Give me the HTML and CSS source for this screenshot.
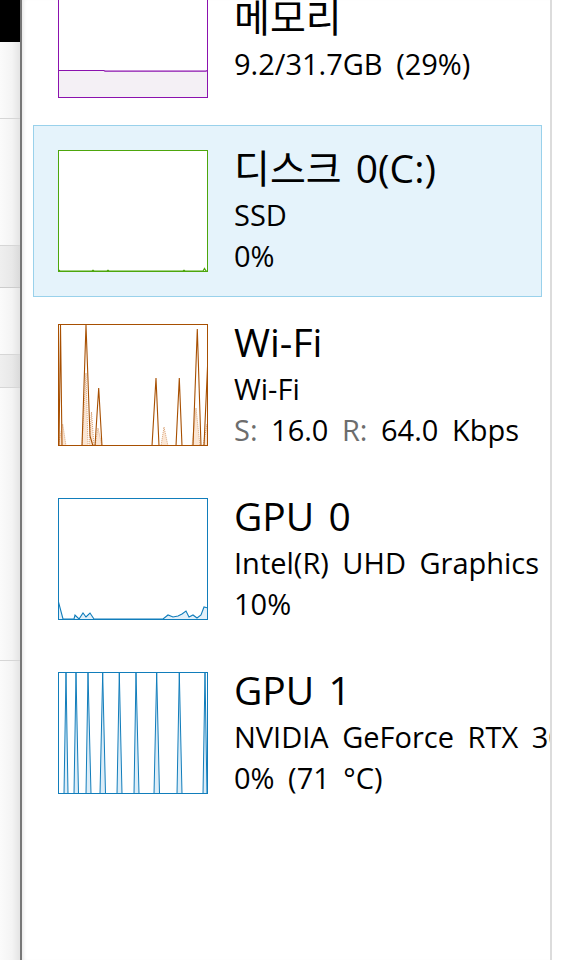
FILE: index.html
```html
<!DOCTYPE html>
<html lang="ko">
<head>
<meta charset="utf-8">
<title>성능</title>
<link rel="stylesheet" href="styles.css">
</head>
<body>
<div class="screen">
  <div class="backdrop">
    <div class="bk bk-black"></div>
    <div class="bk bk-a"></div>
    <div class="bk bk-b"></div>
    <div class="bk bk-c gray"></div>
    <div class="bk bk-d"></div>
    <div class="bk bk-e gray"></div>
    <div class="bk bk-f"></div>
    <div class="bk bk-g"></div>
  </div>
  <div class="edge"></div>
  <div class="panel">
    <div class="list">
      <div class="item">
        <div class="graph mem">
          <svg viewBox="1 1 148 120" preserveAspectRatio="none">
            <polygon points="0,94.5 46,94.5 47,95.2 150,95.2 150,122 0,122" fill="#f4f0f5"/>
            <polyline points="0,94.5 46,94.5 47,95.2 148,95.2 149,94.6 150,94.6" fill="none" stroke="#8b12ae" stroke-width="1.2"/>
          </svg>
        </div>
        <div class="text two">
          <div class="title">메모리</div>
          <div class="line">9.2/31.7GB (29%)</div>
        </div>
      </div>

      <div class="item selected">
        <div class="graph disk">
          <svg viewBox="1 1 148 120" preserveAspectRatio="none">
            <polyline points="0,121 1,120.2 2,121 34,121 35,120.2 36,121 49,121 50,120.2 51,121 125,121 126,120.2 127,121 145,121 146.5,118.5 148,121 150,121" fill="none" stroke="#4da60c" stroke-width="1.2"/>
          </svg>
        </div>
        <div class="text">
          <div class="title">디스크 0(C:)</div>
          <div class="line">SSD</div>
          <div class="line">0%</div>
        </div>
      </div>

      <div class="item">
        <div class="graph net">
          <svg viewBox="1 1 148 120" preserveAspectRatio="none">
            <polygon points="0,122 4.7,100 8,122 24,122 28,49 30,122 31,122 33.5,88 36,122 37,122 40,104 44,122 103,122 106,103 110,122 134,122 138,84 142,122 145,122 149,100 150,122" fill="#fbe6d4"/>
            <polyline points="0,122 4.7,100 8,122 24,122 28,49 30,122 31,122 33.5,88 36,122 37,122 40,104 44,122 103,122 106,103 110,122 134,122 138,84 142,122 145,122 149,100 150,122" fill="none" stroke="#d9a57a" stroke-width="1" stroke-dasharray="1 1"/>
            <polyline points="0,122 1,122 2.5,1 4,122 24,122 28,1 32,112 35,122 37,122 40.7,64 44,122 94,122 98,54 101,122 118,122 121.3,54 124,122 135,122 139.3,5 143,122 146,122 150,32" fill="none" stroke="#a74f01" stroke-width="1.1"/>
          </svg>
        </div>
        <div class="text">
          <div class="title">Wi-Fi</div>
          <div class="line">Wi-Fi</div>
          <div class="line"><span class="label">S:</span> 16.0 <span class="label">R:</span> 64.0 Kbps</div>
        </div>
      </div>

      <div class="item">
        <div class="graph gpu">
          <svg viewBox="1 1 148 120" preserveAspectRatio="none">
            <polygon points="0,102 5,121 16,121 17,117 21,121 25,115 28,119 32,115 36,121 105,121 110,117 115,119 120,118 124,116 128,113 131,119 135,117 139,120 143,117 146,109 150,110 150,122 0,122" fill="#e3f0f9"/>
            <polyline points="0,102 5,121 16,121 17,117 21,121 25,115 28,119 32,115 36,121 105,121 110,117 115,119 120,118 124,116 128,113 131,119 135,117 139,120 143,117 146,109 150,110" fill="none" stroke="#117dbb" stroke-width="1.1"/>
          </svg>
        </div>
        <div class="text">
          <div class="title">GPU 0</div>
          <div class="line">Intel(R) UHD Graphics</div>
          <div class="line">10%</div>
        </div>
      </div>

      <div class="item">
        <div class="graph gpu">
          <svg viewBox="1 1 148 120" preserveAspectRatio="none">
            <polygon points="0,122 6,122 8,1 10,122 16,122 18,1 20.5,122 28,122 30,1 33,122 42,122 44.7,1 47.5,122 59,122 61.3,1 64,122 76,122 78,1 81,122 96,122 98.7,1 101.5,122 119,122 121.3,1 124,122 145,122 147,1 149,122" fill="#dcedf8"/>
            <polyline points="0,122 6,122 8,1 10,122 16,122 18,1 20.5,122 28,122 30,1 33,122 42,122 44.7,1 47.5,122 59,122 61.3,1 64,122 76,122 78,1 81,122 96,122 98.7,1 101.5,122 119,122 121.3,1 124,122 145,122 147,1 149,122" fill="none" stroke="#117dbb" stroke-width="1"/>
          </svg>
        </div>
        <div class="text">
          <div class="title">GPU 1</div>
          <div class="line">NVIDIA GeForce RTX 3070 Laptop GPU</div>
          <div class="line">0% (71 °C)</div>
        </div>
      </div>
    </div>
  </div>
  <div class="rule"></div>
  <div class="rest"></div>
</div>
</body>
</html>
```

FILE: styles.css
```css
html, body {
  margin: 0;
  padding: 0;
  background: #ffffff;
}

body {
  font-family: "Open Sans", "Noto Sans CJK KR", sans-serif;
  color: #000000;
}

.screen {
  display: flex;
  width: 583px;
  height: 960px;
  overflow: hidden;
}

/* window behind, visible at the left edge */
.backdrop {
  width: 20px;
  flex: none;
  display: flex;
  flex-direction: column;
}

.bk {
  flex: none;
  border-bottom: 1px solid #d6d6d6;
  background: linear-gradient(to right, #fbfbfb 0%, #f4f4f4 60%, #e4e4e4 100%);
}

.bk.gray {
  background: linear-gradient(to right, #efefef 0%, #e8e8e8 60%, #dadada 100%);
}

.bk-black {
  height: 42px;
  background: #000000;
  border-bottom: none;
}

.bk-a { height: 76px; }
.bk-b { height: 126px; }
.bk-c { height: 41px; border-bottom-color: #cccccc; }
.bk-d { height: 66px; }
.bk-e { height: 32px; }
.bk-f { height: 272px; }
.bk-g { flex: 1; border-bottom: none; }

.edge {
  width: 2px;
  flex: none;
  background: #777777;
}

.panel {
  width: 528px;
  flex: none;
  box-sizing: border-box;
  padding: 0 8px 0 11px;
  overflow: hidden;
  background: #ffffff;
  box-shadow: inset 4px 0 4px -3px rgba(0, 0, 0, 0.12);
}

.rule {
  width: 2px;
  flex: none;
  background: #dcdcdc;
}

.rest {
  flex: 1;
  background: #ffffff;
}

.list {
  margin-top: -49px;
  display: flex;
  flex-direction: column;
  gap: 2px;
}

.item {
  display: flex;
  gap: 26px;
  height: 172px;
  box-sizing: border-box;
  padding: 24px;
  border: 1px solid transparent;
}

.item.selected {
  background: #e5f3fb;
  border-color: #99d1eb;
}

.graph {
  width: 150px;
  height: 122px;
  flex: none;
  box-sizing: border-box;
  border: 1px solid;
  background: #ffffff;
}

.graph svg {
  display: block;
  width: 148px;
  height: 120px;
}

.graph.mem { border-color: #8b12ae; }
.graph.disk { border-color: #4da60c; }
.graph.net { border-color: #a74f01; }
.graph.gpu { border-color: #117dbb; }

.text {
  display: flex;
  flex-direction: column;
  white-space: nowrap;
  word-spacing: 6px;
}

.text.two {
  padding-top: 23px;
}

.title {
  font-size: 39px;
  line-height: 36px;
  margin-bottom: 8px;
  word-spacing: 4px;
}

.line {
  font-size: 29px;
  line-height: 41px;
}

.label {
  color: #6d6d6d;
}
```
